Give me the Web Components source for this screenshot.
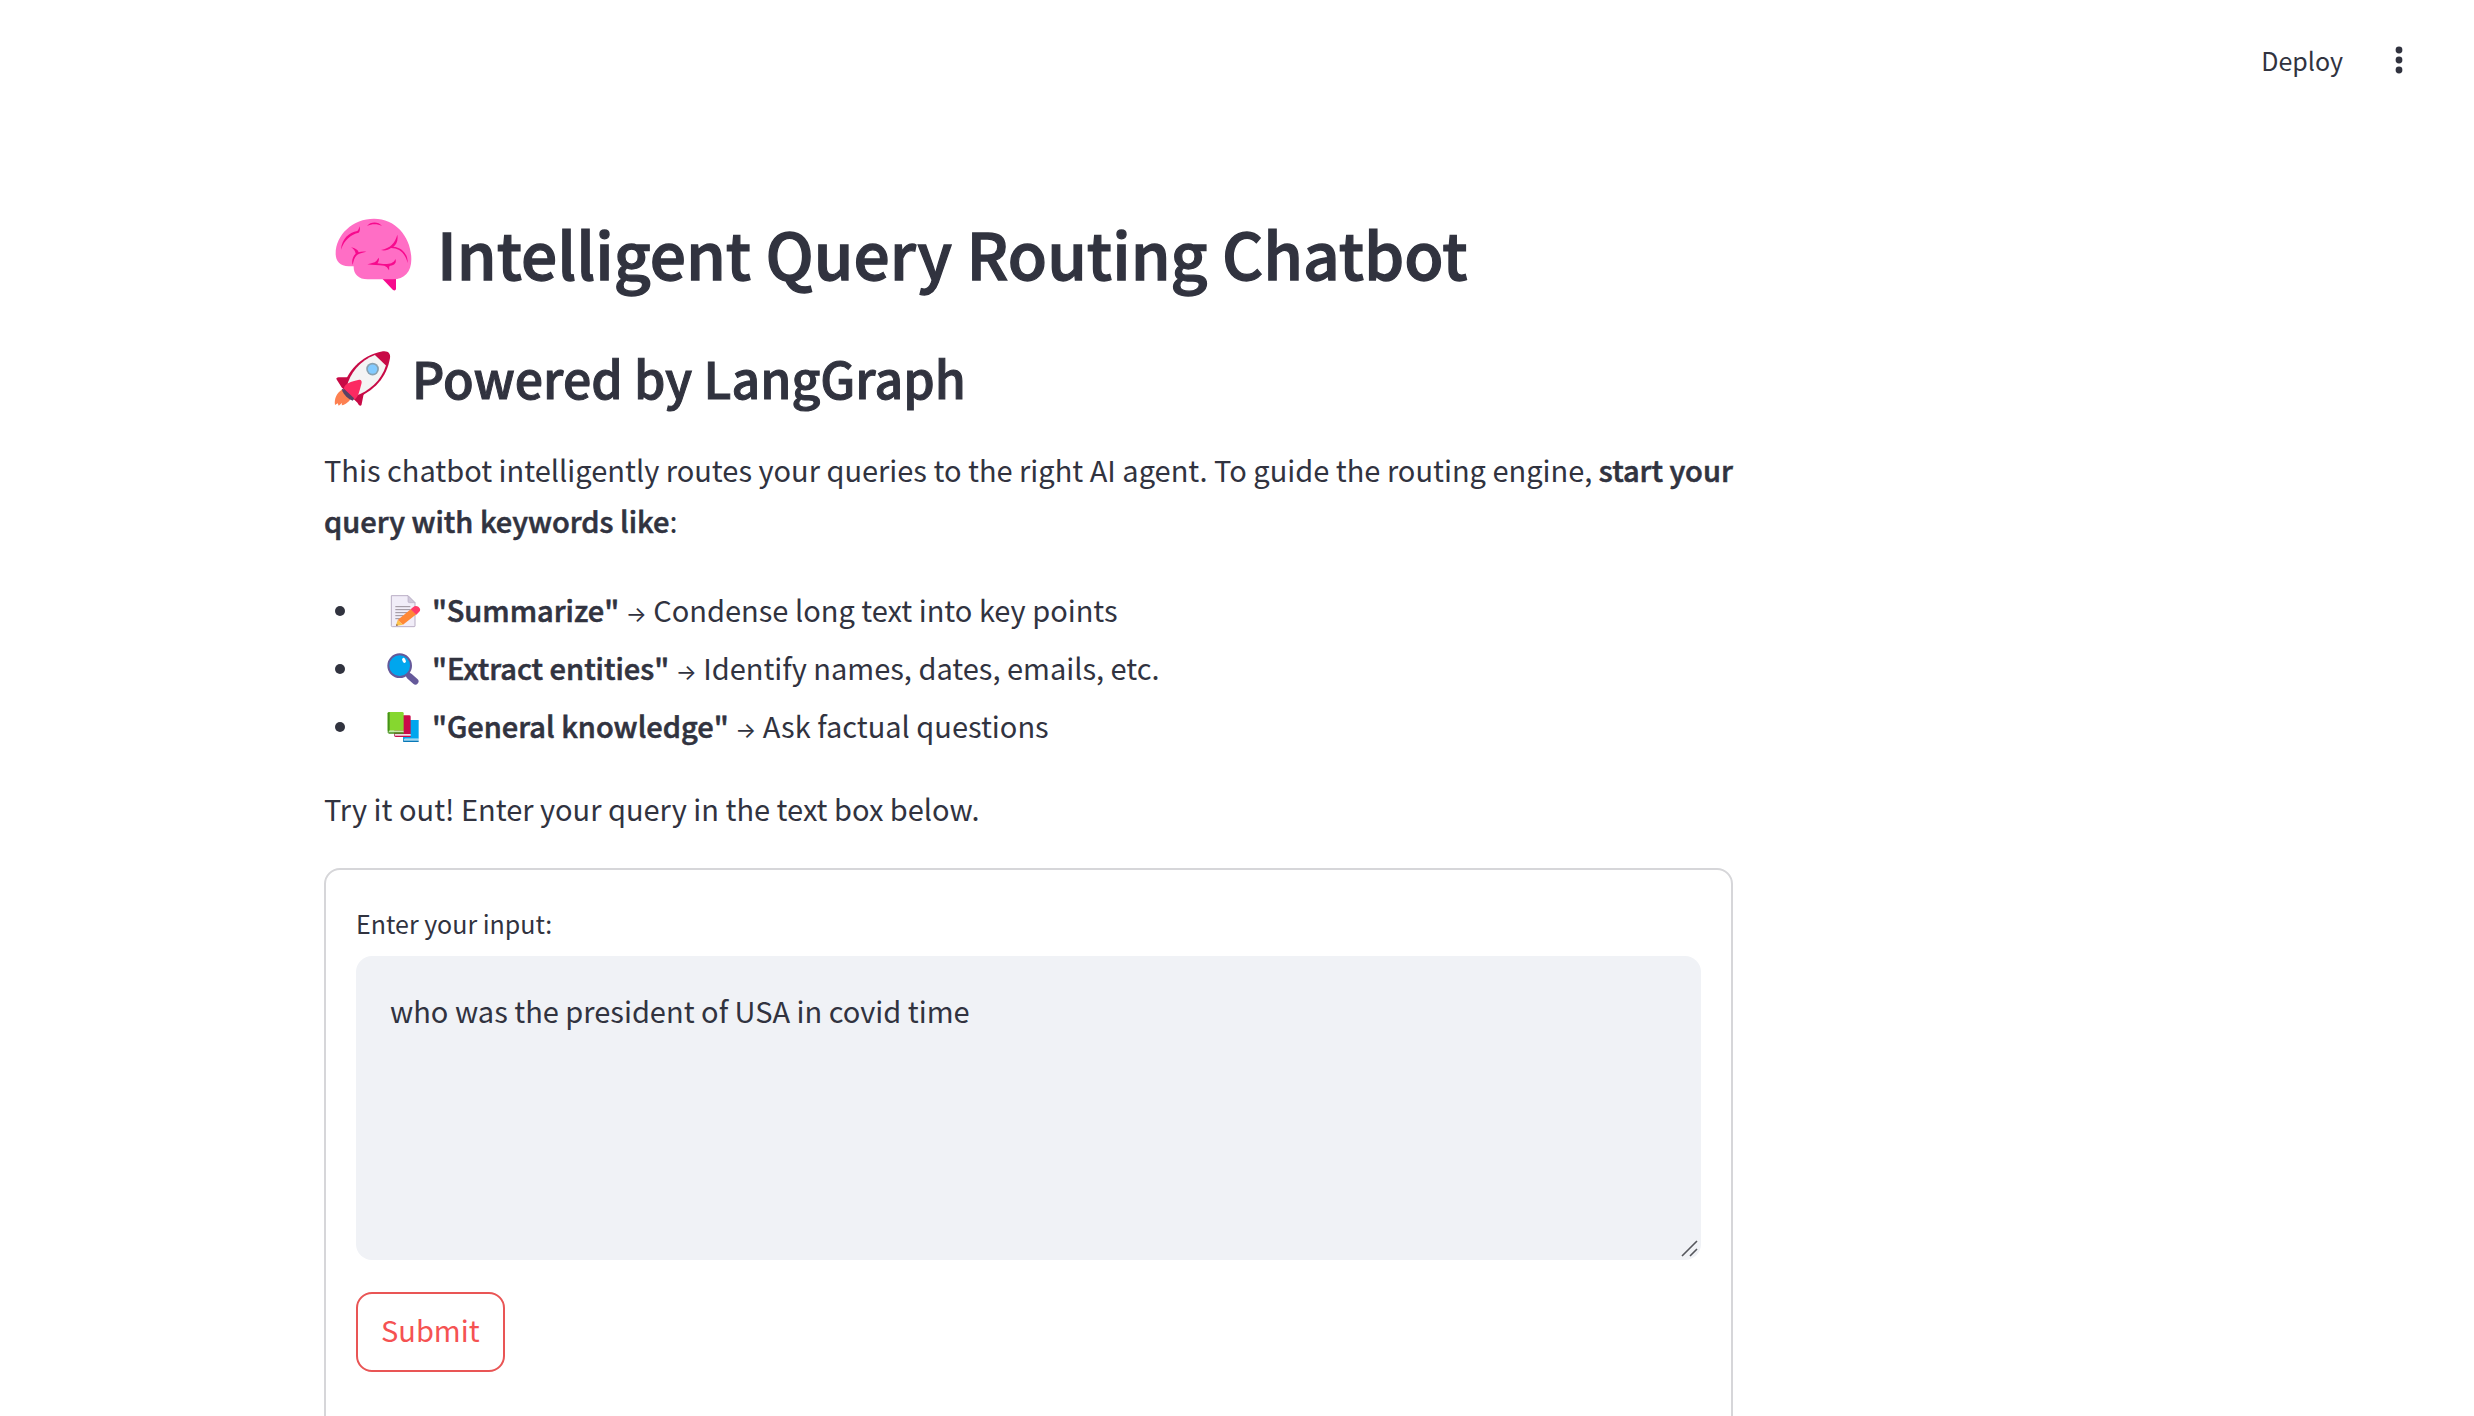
<!DOCTYPE html>
<html lang="en">
<head>
<meta charset="utf-8">
<title>Intelligent Query Routing Chatbot</title>
<style>
html, body { margin: 0; height: 100%; background: #fff; }
body { overflow: hidden; color: #31333f; font-family: "Noto Sans CJK SC", "Open Sans", sans-serif; font-size: 29px; line-height: 51px; }
p { margin: 0; }
strong { font-weight: 500; -webkit-text-stroke: 0.02em currentColor; }
</style>
</head>
<body>
<app-shell>
  <app-toolbar slot="toolbar"></app-toolbar>
  <page-heading level="1" icon="brain">Intelligent Query Routing Chatbot</page-heading>
  <page-heading level="2" icon="rocket">Powered by LangGraph</page-heading>
  <text-block>This chatbot intelligently routes your queries to the right AI agent. To guide the routing engine, <strong>start your query with keywords like</strong>:</text-block>
  <keyword-list></keyword-list>
  <text-block>Try it out! Enter your query in the text box below.</text-block>
  <query-form></query-form>
</app-shell>

<script>
const ICONS = {
  brain: `<svg viewBox="27 16 240 225" aria-hidden="true">
    <path fill="#f70a8d" d="M172 207H213V238Q211 245 204 241Z"/>
    <path fill="#ff6ec5" d="M32 132C32 75 84 27 147 27C214 27 259 84 259 149C259 187 238 209 204 209H128C100 209 85 193 86 170H71C45 169 32 154 32 132Z"/>
    <g fill="#f70a8d">
      <path d="M48 120C50 88 72 68 97 64C101 61 102 56 103 50C106 56 105 66 101 69C78 74 58 90 48 120Z"/>
      <path d="M126 49C137 35 160 35 171 49C158 42 140 42 126 49Z"/>
      <path d="M217 75C220 94 214 105 205 111C230 113 249 132 248 160C241 132 224 115 198 115C190 121 179 124 168 121C196 115 209 102 217 75Z"/>
      <path d="M78 113C91 115 99 121 101 128C107 125 116 125 124 126C112 130 102 131 96 136C88 143 86 154 83 166C79 152 84 140 92 132C91 124 86 118 78 113Z"/>
      <path d="M127 164C141 161 149 159 153 155C157 151 157 148 162 144C162 153 160 158 157 161C166 162 178 164 186 163C200 162 207 158 211 148C216 159 208 167 196 168C190 170 194 176 192 182C188 174 184 170 178 168C160 167 142 166 127 164Z"/>
    </g></svg>`,
  rocket: `<svg viewBox="28 29 170 170" aria-hidden="true">
    <path fill="#fd8051" d="M52 150C36 160 28 178 31 196L39 191L42 198L52 190L51 197C65 194 73 184 78 178Z"/>
    <path fill="#c80a46" d="M70 113L42 113C37 113 33 116 36 120L51 144L98 189C102 198 107 200 110 196L117 161Z"/>
    <path fill="#c80a46" d="M55 142C66 104 103 48 174 36C190 34 197 43 195 56C185 113 151 155 82 181Z"/>
    <path fill="#f4f4f4" d="M66 143C74 101 108 62 150 47L183 78C169 124 132 155 91 169Z"/>
    <circle cx="143" cy="89" r="19" fill="#88a2b1"/><circle cx="143" cy="89" r="14" fill="#83cbff"/>
    <path fill="#fc2a62" d="M57 147C61 132 77 127 103 121C109 120 112 126 110 132C103 156 101 174 88 180Z"/>
    <path fill="#584366" d="M51 148L59 149L88 176L84 183C72 179 56 166 51 148Z"/></svg>`,
  memo: `<svg viewBox="172 26 102 102" aria-hidden="true">
    <path fill="#f1edf8" stroke="#b9aec5" stroke-width="3" d="M185 31H235L256 52V122Q256 124 253 124H188Q185 124 185 121Z"/>
    <path fill="#cfc8da" stroke="#b9aec5" stroke-width="2" d="M235 31V48Q235 52 239 52H256Z"/>
    <path fill="none" stroke="#989099" stroke-width="3" d="M197 64H242M197 73H242M197 82H236M197 91H222M197 100H215"/>
    <path fill="#ff8836" d="M244 71L260 87L220 118L204 104Z"/>
    <path fill="#fdc34b" d="M204 104L220 118L202 121Q199 121 200 117Z"/>
    <path fill="#77503d" d="M201 116L205 120L199 122Z"/>
    <path fill="#ff3b68" d="M250 66Q257 59 266 64Q276 73 268 80L260 88L243 72Z"/></svg>`,
  search: `<svg viewBox="172 200 102 102" aria-hidden="true">
    <path stroke="#65599a" stroke-width="14" d="M229 263L240 274"/>
    <path stroke="#65599a" stroke-width="19" stroke-linecap="round" d="M240 273L257 288"/>
    <circle cx="210" cy="241" r="34" fill="#00a6ee" stroke="#65599a" stroke-width="6"/>
    <ellipse cx="223" cy="225" rx="5" ry="8" fill="#fff" transform="rotate(-25 223 225)"/></svg>`,
  books: `<svg viewBox="172 381 102 102" aria-hidden="true">
    <path fill="#0878b7" d="M220 411H226V476H220Z"/><path fill="#00a6ee" d="M225 411H267V467H220V415Q220 411 225 411Z"/>
    <path fill="#9fd6f1" d="M222 467H267V474H222Z"/><path fill="#0878b7" d="M220 473H267V477H224Q220 476 220 472Z"/>
    <path fill="#8d1238" d="M194 400H200V460H194Z"/><path fill="#ca0b4a" d="M200 397H238Q243 397 243 401V453H194V401Q194 397 200 397Z"/>
    <path fill="#f2dbe5" d="M196 453H243V459H196Z"/><path fill="#ca0b4a" d="M194 458H243V462H198Q194 461 194 457Z"/>
    <path fill="#86d72f" d="M179 387H218Q222 387 222 391V443H174V391Q174 387 179 387Z"/>
    <path fill="#44911b" d="M174 389L180 387V443L174 449Z"/>
    <path fill="#c5e9ab" d="M178 443H222V449H178Z"/><path fill="#44911b" d="M174 448H222V452H178Q174 451 174 447Z"/></svg>`
};

class AppShell extends HTMLElement {
  constructor() {
    super();
    this.attachShadow({ mode: 'open' }).innerHTML = `<style>
      :host { display: flex; flex-direction: column; height: 100vh; overflow: auto; scrollbar-width: none; }
      main { display: flex; flex-direction: column; box-sizing: border-box; width: 100%; max-width: 1733px; padding: 93px 0 64px 324px; }
    </style><slot name="toolbar"></slot><main><slot></slot></main>`;
  }
}

class AppToolbar extends HTMLElement {
  constructor() {
    super();
    this.attachShadow({ mode: 'open' }).innerHTML = `<style>
      :host { display: block; }
      header { display: flex; justify-content: flex-end; align-items: center; gap: 41px; height: 120px; padding-right: 60px; }
      button { display: flex; align-items: center; padding: 0; border: 0; background: none; color: inherit; font: inherit; font-size: 25px; line-height: 36px; cursor: pointer; }
      svg { width: 30px; height: 32px; fill: currentColor; }
    </style><header>
      <button type="button">Deploy</button>
      <button type="button" aria-label="Main menu"><svg viewBox="0 0 30 32"><circle cx="15" cy="6" r="3.4"/><circle cx="15" cy="16" r="3.4"/><circle cx="15" cy="26" r="3.4"/></svg></button>
    </header>`;
  }
}

class PageHeading extends HTMLElement {
  constructor() {
    super();
    const level = this.getAttribute('level');
    this.attachShadow({ mode: 'open' }).innerHTML = `<style>
      :host { display: block; }
      h1, h2 { display: flex; align-items: center; margin: 0; padding-left: 10px; font-weight: 500; -webkit-text-stroke: 0.02em currentColor; }
      h1 { gap: 23px; font-size: 64px; line-height: 78px; }
      h2 { gap: 21px; margin: 55px 0 4px; font-size: 50px; line-height: 62px; }
      h1 svg { width: 80px; height: 75px; overflow: visible; }
      h2 svg { width: 57px; height: 57px; overflow: visible; }
    </style><h${level}>${ICONS[this.getAttribute('icon')]}<span><slot></slot></span></h${level}>`;
  }
}

class TextBlock extends HTMLElement {
  constructor() {
    super();
    this.attachShadow({ mode: 'open' }).innerHTML = `<style>
      :host { display: block; margin-top: 32px; }
      p { margin: 0; }
    </style><p><slot></slot></p>`;
  }
}

class KeywordList extends HTMLElement {
  constructor() {
    super();
    const items = [
      ['memo', 'Summarize', 'Condense long text into key points'],
      ['search', 'Extract entities', 'Identify names, dates, emails, etc.'],
      ['books', 'General knowledge', 'Ask factual questions']
    ];
    this.attachShadow({ mode: 'open' }).innerHTML = `<style>
      :host { display: block; margin-top: 38px; }
      ul { display: flex; flex-direction: column; gap: 7px; margin: 0; padding: 0 0 0 11px; list-style: none; }
      li { display: flex; align-items: center; }
      li::before { content: ""; width: 10px; height: 10px; margin: 2px 42px 0 0; border-radius: 50%; background: currentColor; }
      svg { width: 34px; height: 34px; margin: 2px 11px 0 0; }
      strong { font-weight: 500; -webkit-text-stroke: 0.02em currentColor; }
      .arrow { font-family: Inter, sans-serif; font-size: 22px; line-height: 1; }
    </style><ul>${items.map(([icon, key, text]) =>
      `<li>${ICONS[icon]}<span><strong>"${key}"</strong> <span class="arrow">→</span> ${text}</span></li>`).join('')}</ul>`;
  }
}

class QueryForm extends HTMLElement {
  constructor() {
    super();
    this.attachShadow({ mode: 'open' }).innerHTML = `<style>
      :host { display: block; margin-top: 34px; }
      form { display: flex; flex-direction: column; align-items: flex-start; padding: 34px 30px 64px; border: 2px solid #d6d6d9; border-radius: 16px; }
      label { margin-bottom: 14px; font-size: 25px; line-height: 38px; }
      .field { position: relative; display: flex; width: 100%; margin-bottom: 32px; }
      textarea { box-sizing: border-box; width: 100%; height: 304px; padding: 29px 34px; border: 0; border-radius: 16px; outline: 0; resize: none; background: #f0f2f6; color: inherit; font: inherit; }
      .grip { position: absolute; right: 2px; bottom: 2px; width: 18px; height: 18px; pointer-events: none; fill: none; stroke: #55565c; stroke-width: 1.6; }
      button { padding: 9px 23px 15px; border: 2px solid #e95555; border-radius: 16px; background: #fff; color: #f55252; font: inherit; line-height: 52px; cursor: pointer; }
    </style><form>
      <label for="query">Enter your input:</label>
      <div class="field">
        <textarea id="query">who was the president of USA in covid time</textarea>
        <svg class="grip" viewBox="0 0 18 18" aria-hidden="true"><path d="M1 16L16 1M9 16L16 9"/></svg>
      </div>
      <button type="button">Submit</button>
    </form>`;
  }
}

customElements.define('app-shell', AppShell);
customElements.define('app-toolbar', AppToolbar);
customElements.define('page-heading', PageHeading);
customElements.define('text-block', TextBlock);
customElements.define('keyword-list', KeywordList);
customElements.define('query-form', QueryForm);
</script>
</body>
</html>
